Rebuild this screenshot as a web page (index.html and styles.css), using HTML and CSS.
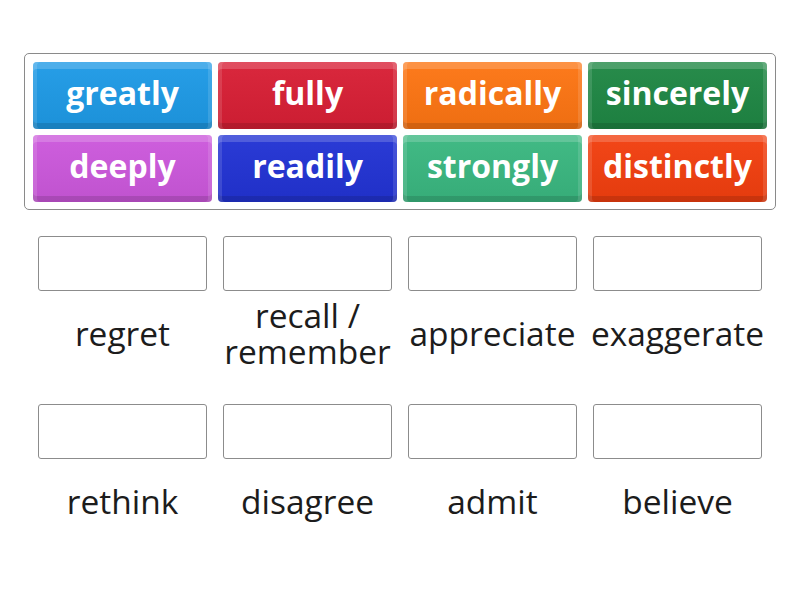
FILE: index.html
```html
<!DOCTYPE html>
<html>
<head>
<meta charset="utf-8">
<link rel="stylesheet" href="styles.css">
</head>
<body>
<div class="page">
  <div class="bank">
    <div class="tile blue">greatly</div>
    <div class="tile red">fully</div>
    <div class="tile orange">radically</div>
    <div class="tile dgreen">sincerely</div>
    <div class="tile purple">deeply</div>
    <div class="tile navy">readily</div>
    <div class="tile teal">strongly</div>
    <div class="tile vermilion">distinctly</div>
  </div>
  <div class="targets">
    <div class="cell"><div class="slot"></div><div class="label">regret</div></div>
    <div class="cell"><div class="slot"></div><div class="label"><span>recall /</span><span>remember</span></div></div>
    <div class="cell"><div class="slot"></div><div class="label">appreciate</div></div>
    <div class="cell"><div class="slot"></div><div class="label">exaggerate</div></div>
    <div class="cell"><div class="slot"></div><div class="label">rethink</div></div>
    <div class="cell"><div class="slot"></div><div class="label">disagree</div></div>
    <div class="cell"><div class="slot"></div><div class="label">admit</div></div>
    <div class="cell"><div class="slot"></div><div class="label">believe</div></div>
  </div>
</div>
</body>
</html>
```
FILE: styles.css
```css
html, body {
  margin: 0;
  padding: 0;
  background: #fff;
}
.page {
  width: 800px;
  height: 600px;
  box-sizing: border-box;
  padding-top: 53px;
  font-family: "Open Sans", "Liberation Sans", sans-serif;
}
.bank {
  width: 752px;
  box-sizing: border-box;
  margin: 0 auto;
  border: 1px solid #8a8a8a;
  border-radius: 5px;
  padding: 8px 8px 7px 8px;
  display: grid;
  grid-template-columns: repeat(4, 179px);
  grid-auto-rows: 67px;
  column-gap: 6px;
  row-gap: 6px;
}
.tile {
  border-radius: 4px;
  color: #fff;
  font-weight: 700;
  font-size: 32px;
  display: flex;
  align-items: center;
  justify-content: center;
  padding-bottom: 7px;
  box-sizing: border-box;
  box-shadow:
    inset 0 7px 0 rgba(255,255,255,0.18),
    inset 4px 0 0 rgba(255,255,255,0.12),
    inset -4px 0 0 rgba(255,255,255,0.12),
    inset 0 -6px 0 rgba(0,0,0,0.12);
  background-image: linear-gradient(to bottom, rgba(255,255,255,0.04), rgba(0,0,0,0.06));
}
.blue { background-color: #1e9ae6; }
.red { background-color: #d81f35; }
.orange { background-color: #fd7513; }
.dgreen { background-color: #1f8744; }
.purple { background-color: #cc58dc; }
.navy { background-color: #2233d4; }
.teal { background-color: #3ab780; }
.vermilion { background-color: #f23f0f; }

.targets {
  width: 724px;
  margin: 26px auto 0;
  display: grid;
  grid-template-columns: repeat(4, 169px);
  column-gap: 16px;
  row-gap: 29px;
}
.cell {
  display: flex;
  flex-direction: column;
}
.slot {
  height: 55px;
  box-sizing: border-box;
  border: 1px solid #8c8c8c;
  border-radius: 3px;
}
.label {
  height: 84px;
  display: flex;
  flex-direction: column;
  align-items: center;
  justify-content: center;
  text-align: center;
  font-size: 33.5px;
  line-height: 36px;
  color: #1c1c1c;
  white-space: nowrap;
}
```
